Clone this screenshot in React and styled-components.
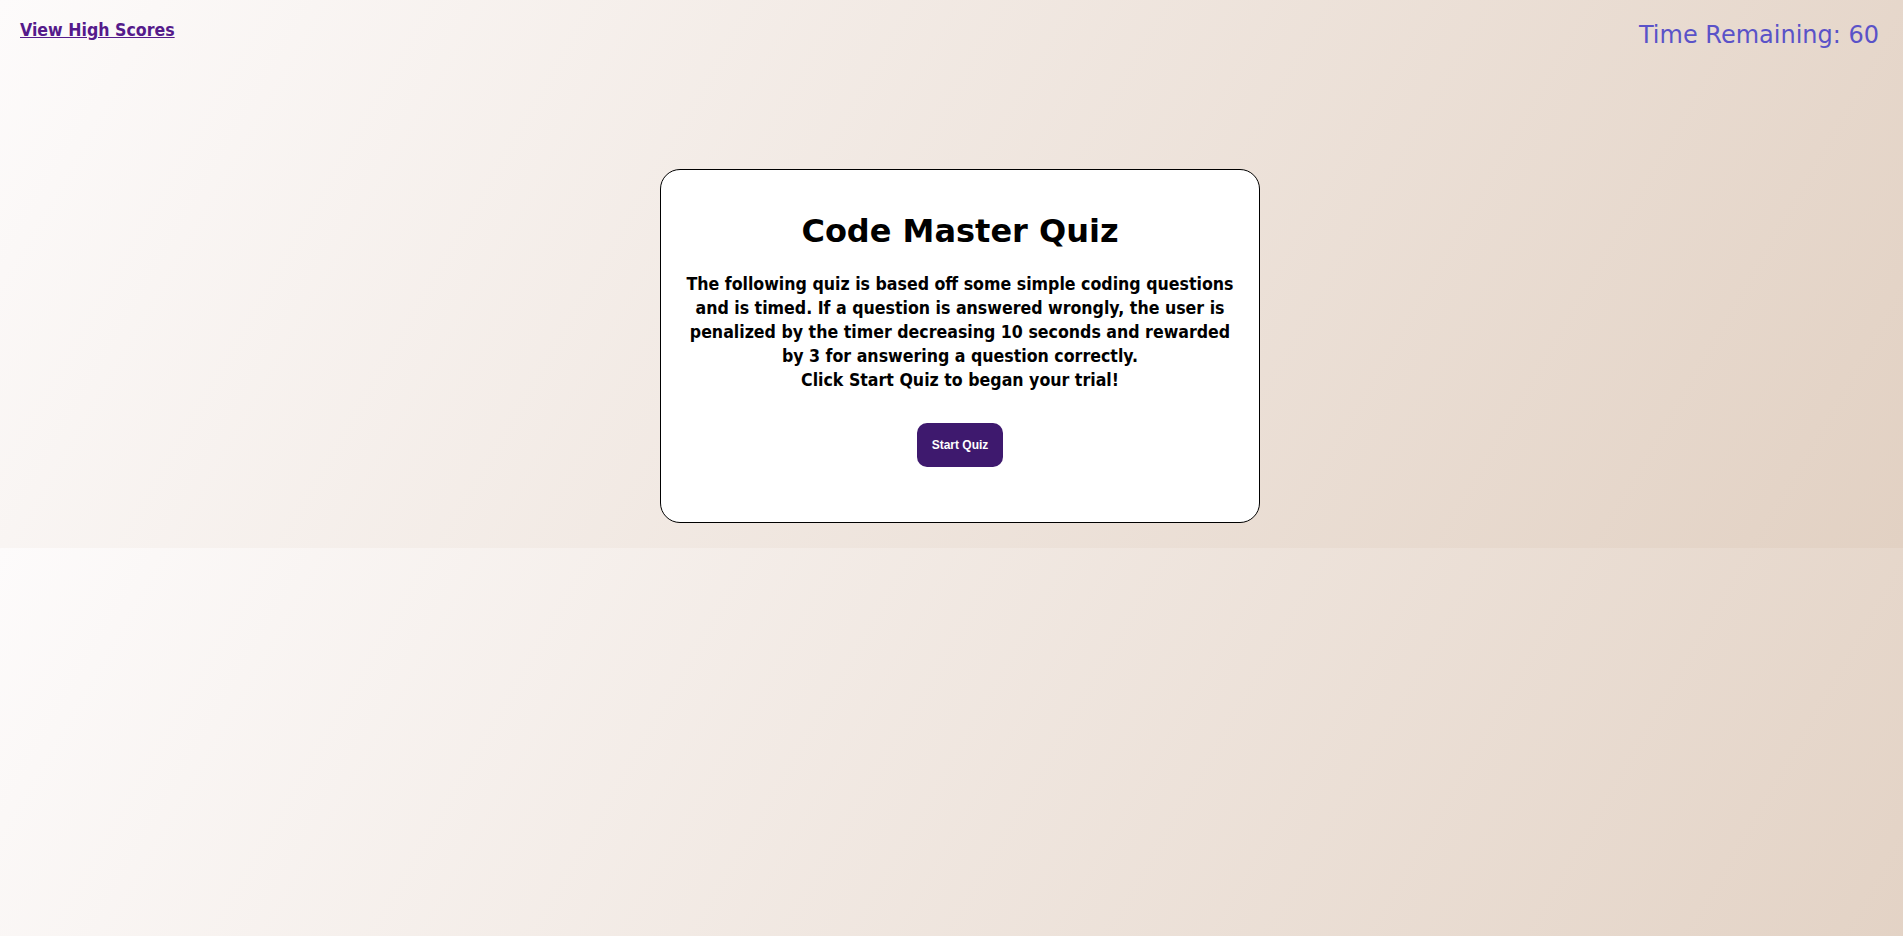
import React from "react";
import styled, { createGlobalStyle } from "styled-components";

const GlobalStyle = createGlobalStyle`
  body {
    margin: 0;
    background: linear-gradient(120deg, #fdfbfb 0%, #e2d1c3 100%);
    font-family: "DejaVu Sans Condensed", "DejaVu Sans", Tahoma, sans-serif;
    color: #000;
  }
`;

const Header = styled.header`
  display: flex;
  justify-content: space-between;
  align-items: flex-start;
  padding: 20px 24px 0 20px;
`;

const ScoresLink = styled.a`
  font-size: 17.6px;
  font-weight: bold;
  color: #551a8b;
  text-decoration: underline;
`;

const Timer = styled.div`
  margin-top: 1px;
  font-family: "DejaVu Sans", Tahoma, sans-serif;
  font-size: 24px;
  color: #5a52c8;
`;

const Main = styled.main`
  display: flex;
  justify-content: center;
  padding: 120px 0 25px 17px;
`;

const Card = styled.section`
  box-sizing: border-box;
  width: 600px;
  padding: 20px 20px 55px;
  background: #fff;
  border: 1px solid #000;
  border-radius: 20px;
  text-align: center;
`;

const Title = styled.h1`
  margin: 22px 0;
  font-family: "DejaVu Sans", Tahoma, sans-serif;
  font-size: 32px;
  font-weight: bold;
`;

const Intro = styled.p`
  margin: 0;
  font-size: 17.6px;
  line-height: 24px;
  font-weight: bold;
`;

const Actions = styled.div`
  display: flex;
  justify-content: center;
  padding-top: 31px;
`;

const StartButton = styled.button`
  height: 44px;
  padding: 0 15px;
  border: none;
  border-radius: 10px;
  background: #3e196e;
  color: #fff;
  font-family: "Liberation Sans", Arial, sans-serif;
  font-size: 12px;
  font-weight: bold;
  cursor: pointer;
`;

const App = () => {
  return (
    <>
      <GlobalStyle />
      <Header>
        <ScoresLink href="#highscores">View High Scores</ScoresLink>
        <Timer>Time Remaining: 60</Timer>
      </Header>
      <Main>
        <Card>
          <Title>Code Master Quiz</Title>
          <Intro>
            The following quiz is based off some simple coding questions and is
            timed. If a question is answered wrongly, the user is penalized by
            the timer decreasing 10 seconds and rewarded by 3 for answering a
            question correctly.
            <br />
            Click Start Quiz to began your trial!
          </Intro>
          <Actions>
            <StartButton>Start Quiz</StartButton>
          </Actions>
        </Card>
      </Main>
    </>
  );
};

export default App;
